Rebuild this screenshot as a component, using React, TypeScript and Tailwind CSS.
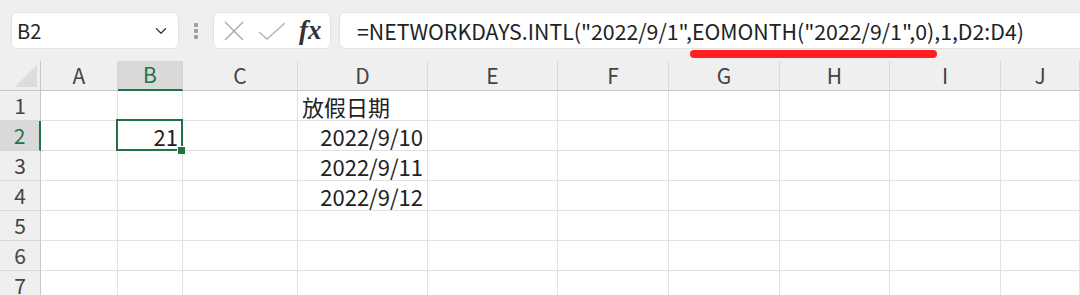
import { ChevronDown } from "lucide-react";

const font = { fontFamily: '"Noto Sans CJK SC", "Noto Sans", sans-serif' };

const cols = ["A", "B", "C", "D", "E", "F", "G", "H", "I", "J"];

const cells: Record<string, { text: string; align: "left" | "right" }> = {
  D1: { text: "放假日期", align: "left" },
  B2: { text: "21", align: "right" },
  D2: { text: "2022/9/10", align: "right" },
  D3: { text: "2022/9/11", align: "right" },
  D4: { text: "2022/9/12", align: "right" },
};

function Toolbar() {
  return (
    <div className="relative flex h-[61px] items-center bg-[#efefef] pl-[11px]">
      <div className="flex h-[37px] w-[168px] items-center justify-between rounded-[6px] border border-[#e3e3e3] bg-white pl-[5px] pr-[8px]">
        <span className="text-[20px] text-[#222]">B2</span>
        <ChevronDown size={18} strokeWidth={1.6} className="text-[#333]" />
      </div>
      <div className="ml-[15px] flex w-[4px] flex-col gap-[2px]">
        <div className="h-[4px] w-[4px] rounded-[1px] bg-[#9e9e9e]" />
        <div className="h-[4px] w-[4px] rounded-[1px] bg-[#9e9e9e]" />
        <div className="h-[4px] w-[4px] rounded-[1px] bg-[#9e9e9e]" />
      </div>
      <div className="ml-[15px] flex h-[37px] w-[118px] items-center rounded-[6px] border border-[#e3e3e3] bg-white pl-[9px]">
        <svg width="22" height="20" viewBox="0 0 22 20" fill="none" stroke="#a8a8a8" strokeWidth="1.4">
          <path d="M2 1 L20 19 M20 1 L2 19" />
        </svg>
        <svg width="28" height="18" viewBox="0 0 28 18" fill="none" stroke="#b3b3b3" strokeWidth="1.4" className="ml-[13px]">
          <path d="M1 10 L9 17 L27 1" />
        </svg>
        <span
          className="ml-[13px] text-[27px] font-bold italic leading-none text-[#333]"
          style={{ fontFamily: '"Liberation Serif", "DejaVu Serif", serif' }}
        >
          fx
        </span>
      </div>
      <div className="ml-[8px] flex h-[37px] flex-1 items-center rounded-l-[6px] border-y border-l border-[#e3e3e3] bg-white pl-[17px]">
        <span className="whitespace-nowrap text-[21.3px] text-[#222]">
          =NETWORKDAYS.INTL("2022/9/1",EOMONTH("2022/9/1",0),1,D2:D4)
        </span>
      </div>
      <div className="absolute left-[690px] top-[50px] h-[8px] w-[247px] rounded-full bg-[#ff1f1f]" />
    </div>
  );
}

function Grid() {
  return (
    <div className="grid grid-cols-[41px_77px_65px_115px_130px_130px_111px_111px_110px_111px_1fr]">
      <div className="flex h-[30px] items-end justify-end border-b border-r border-[#c8c8c8] bg-[#efefef] pb-[3px] pr-[3px]">
        <div className="h-0 w-0 border-b-[22px] border-l-[22px] border-b-[#dcdcdc] border-l-transparent" />
      </div>
      {cols.map((c) => (
        <div
          key={c}
          className={
            c === "B"
              ? "flex h-[30px] items-center justify-center border-b-2 border-r border-b-[#217346] border-r-[#d4d4d4] bg-[#d9d9d9] text-[21px] text-[#217346]"
              : "flex h-[30px] items-center justify-center border-b border-r border-b-[#c8c8c8] border-r-[#d9d9d9] bg-[#efefef] text-[21px] text-[#444]"
          }
        >
          {c}
        </div>
      ))}
      {[1, 2, 3, 4, 5, 6, 7].map((r) => (
        <Row key={r} r={r} />
      ))}
    </div>
  );
}

function Row({ r }: { r: number }) {
  return (
    <>
      <div
        className={
          r === 2
            ? "flex h-[30px] items-center justify-center border-b border-r-2 border-b-[#d4d4d4] border-r-[#217346] bg-[#d9d9d9] text-[21px] text-[#217346]"
            : "flex h-[30px] items-center justify-center border-b border-r border-b-[#d9d9d9] border-r-[#c8c8c8] bg-[#efefef] text-[21px] text-[#444]"
        }
      >
        {r}
      </div>
      {cols.map((c) => {
        const cell = cells[c + r];
        const selected = c === "B" && r === 2;
        return (
          <div
            key={c}
            className={
              "relative flex h-[30px] items-center border-b border-r border-[#e1e1e1] bg-white text-[22px] text-[#222] " +
              (cell?.align === "right" ? "justify-end pr-[4px]" : "justify-start pl-[4px]") +
              (selected ? " z-10" : "")
            }
          >
            {cell && <span className="whitespace-nowrap leading-none">{cell.text}</span>}
            {selected && (
              <>
                <div className="absolute -left-[2px] -top-[2px] bottom-[-1px] right-[-1px] border-2 border-[#217346]" />
                <div className="absolute bottom-[-4px] right-[-3px] z-20 h-[8px] w-[8px] border-l border-t border-white bg-[#217346]" />
              </>
            )}
          </div>
        );
      })}
    </>
  );
}

export default function App() {
  return (
    <div className="h-[295px] w-[1080px] overflow-hidden bg-white" style={font}>
      <Toolbar />
      <Grid />
    </div>
  );
}
